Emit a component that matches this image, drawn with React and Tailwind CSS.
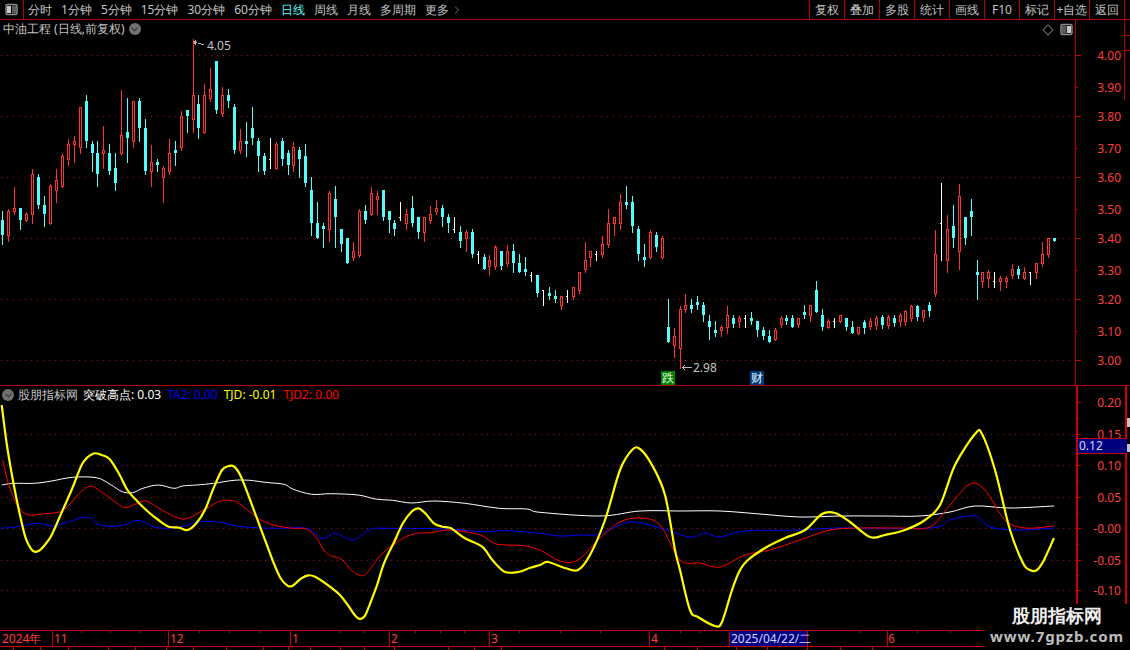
import React from "react";
import { ChevronDown, ChevronRight } from "lucide-react";

const G = [
  { ox: 0, oy: 40, d: `c 7 514 540 585 612|r 25 507 513 588 603|r 43 441 504 516 522|c 61 504 504 540 567|r 79 516 522 543 543|r 97 387 402 525 549|c 115 402 411 495 504|c 133 468 495 522 558|r 151 432 438 552 552|r 169 387 420 453 486|r 187 342 348 441 441|r 205 297 312 360 375|r 223 288 303 315 366|r 241 201 201 324 339|c 259 165 183 303 321|c 277 303 312 339 393|c 292 303 339 402 438|r 310 258 330 342 384|c 328 312 339 393 402|c 346 339 384 429 450|r 364 150 285 342 342|c 382 174 276 294 366|r 400 183 183 306 321|c 418 174 183 264 303|c 436 237 264 393 402|r 454 315 366 396 438|c 472 357 366 375 393|r 490 378 384 414 486|r 508 297 339 396 402|c 526 303 330 339 375|r 544 213 228 324 330|c 562 210 210 228 276|r 580 -3 165 240 276|c 595 165 192 264 294|r 613 132 165 279 279|r 631 84 147 177 183|c 649 63 63 210 219|r 667 141 165 222 228|c 685 147 165 183 201|c 703 192 201 330 339|r 721 267 303 333 339|c 739 246 303 312 348|c 757 201 264 294 312|c 775 294 303 348 393|c 793 339 348 393 402|w 811 294 357 357 384|r 829 306 312 387 387|c 847 294 303 357 375|c 865 330 339 375 402|r 881 306 321 378 393|c 898 321 330 357 411|c 916 312 348 429 438|c 934 411 450 549 585|c 952 486 549 594 594|c 970 549 558 567 621|r 988 453 459 570 603|c 1006 438 477 531 621|c 1024 567 567 612 633|c 1042 594 594 669 669|r 1060 606 633 654 660|r 1078 507 513 648 651` },
  { ox: 300, oy: 170, d: `c 196 105 123 150 159|r 214 51 69 135 135|r 232 63 78 90 132|c 250 60 60 141 150|c 268 123 123 150 186|c 283 150 159 177 195|w 301 96 141 141 150|r 319 117 132 162 177|c 337 78 114 159 168|c 355 141 141 186 204|r 373 141 141 189 213|r 391 108 132 153 159|r 409 90 114 126 132|c 427 105 114 141 168|c 445 132 141 159 186|w 463 141 177 177 186|c 481 168 186 213 231|r 499 180 186 207 243|c 517 177 186 252 261|w 535 243 252 252 279|c 553 252 261 297 297|r 568 255 270 291 315|r 586 225 231 291 297|c 604 243 243 288 297|r 622 225 243 282 288|c 640 222 243 279 306|c 658 252 279 306 306|c 676 261 297 306 315|w 694 306 315 315 333|c 712 315 315 369 378|w 730 360 360 360 405|c 748 351 369 378 387|c 766 360 378 387 396|r 784 378 378 408 417|w 802 360 378 378 396|r 820 351 351 381 387|r 838 306 306 363 369|r 856 216 270 300 306|r 871 243 243 264 288|w 889 243 252 252 270|r 907 198 222 255 261|r 925 117 159 225 231|r 943 141 141 162 195|r 961 72 96 162 177|c 979 48 96 105 114|c 997 78 96 168 186|c 1015 168 177 252 270|c 1033 222 261 270 288|r 1051 180 186 264 264|c 1069 186 195 231 243|r 1087 198 204 264 264|c 1105 387 471 516 516|r 1123 474 498 528 561` },
  { ox: 620, oy: 280, d: `r 181 78 87 207 265|r 197 42 75 90 96|c 214 57 75 87 96|c 232 48 66 75 87|c 250 66 75 105 123|c 268 105 123 141 177|c 286 123 150 159 168|r 304 135 141 153 168|r 322 78 105 144 159|c 340 105 114 132 141|r 358 108 114 126 141|w 376 105 114 114 141|c 394 96 114 123 132|c 412 123 123 150 168|c 430 141 150 168 177|c 448 150 168 186 186|r 466 144 150 180 180|r 484 108 114 135 141|c 499 105 114 123 132|c 517 105 114 141 141|r 535 114 114 135 141|c 553 75 96 105 114|r 571 75 75 108 123|c 589 3 30 96 96|c 607 87 105 141 150|r 625 117 123 144 144|w 643 114 123 123 141|r 661 105 105 126 126|c 679 114 114 141 150|c 697 123 141 159 159|r 715 141 141 162 162` },
  { ox: 0, oy: 0, d: `c 2592 960 966 984 999|r 2610 954 963 981 987|r 2628 948 954 978 987|c 2646 945 951 975 984|r 2664 945 951 978 984|c 2682 945 954 969 978|r 2700 939 945 966 978|r 2715 930 933 966 975|r 2733 915 918 957 963|c 2751 915 918 951 960|r 2769 930 930 954 963|c 2787 906 915 933 948` },
  { ox: 900, oy: 170, d: `r 107 180 252 372 378|w 124 39 160 160 270|r 142 135 177 273 306|c 160 105 168 204 231|r 178 42 78 246 297|c 196 141 141 204 222|c 214 87 123 141 195|c 232 270 306 315 387|r 247 306 306 336 351|r 265 300 306 327 351|w 283 306 333 333 351|r 301 318 324 336 360|r 319 318 324 336 351|r 337 282 297 318 324|c 355 288 297 315 324|r 373 291 306 327 327|w 391 306 306 306 342|r 409 279 279 309 324|r 427 216 252 282 288|r 445 204 204 255 261|c 463 204 204 213 213` },
];

const candles = G.flatMap((g) =>
  g.d.split("|").map((row) => {
    const [t, ...n] = row.trim().split(" ");
    const [x, h, a, b, l] = n.map(Number);
    return {
      t,
      x: g.ox + Math.floor(x / 3),
      h: g.oy + Math.floor(h / 3),
      a: g.oy + Math.floor(a / 3),
      b: g.oy + Math.floor(b / 3),
      l: g.oy + Math.floor(l / 3),
    };
  })
);

const CYAN = "#54fcfc";
const RED = "#ff3232";
const LINE = "#b40000";
const DOT = "#a01414";

function Candle({ c }) {
  const cx = c.x + 0.5;
  if (c.t === "w") {
    return (
      <g stroke="#ffffff">
        <line x1={cx} x2={cx} y1={c.h} y2={c.l + 1} />
        <line x1={c.x - 1} x2={c.x + 1} y1={c.a + 0.5} y2={c.a + 0.5} />
      </g>
    );
  }
  if (c.t === "c") {
    return (
      <g>
        <line x1={cx} x2={cx} y1={c.h} y2={c.l + 1} stroke={CYAN} />
        <rect x={c.x - 1} y={c.a} width={3} height={Math.max(c.b - c.a, 2)} fill={CYAN} />
      </g>
    );
  }
  return (
    <g stroke={RED}>
      <line x1={cx} x2={cx} y1={c.h} y2={c.a} />
      <line x1={cx} x2={cx} y1={c.b} y2={c.l + 1} />
      <rect x={c.x - 0.5} y={c.a + 0.5} width={2} height={Math.max(c.b - c.a - 1, 1)} fill="#000000" />
    </g>
  );
}

const fromZoom = (pts) => pts.map(([x, y]) => [x / 2.904, 395 + y / 3]);

const yellow = [
  ...fromZoom([[5,30],[20,150],[40,270],[60,370],[75,430],[95,467],[112,468],[130,450],[150,420],[180,350],[210,280],[240,205],[270,176],[295,180],[318,192],[345,235],[370,285],[400,320],[430,350],[460,375],[490,395],[520,398],[545,405],[570,385],[595,345],[620,280],[645,225],[665,213],[680,215],[700,245],[730,325],[755,395],[775,450],[795,505],[815,550],[835,572],[850,572],[875,550],[895,541],[915,545],[945,565],[985,598],[1010,630],[1030,660],[1045,672],[1060,662],[1075,625],[1095,570],[1115,505],[1145,440],[1170,385],[1195,350],[1215,340],[1235,355],[1260,385],[1285,395],[1310,400],[1350,430],[1400,455],[1430,495],[1465,530],[1505,531],[1540,518],[1568,510]]),
  [548,562],[565,568],[578,570],[590,555],[605,520],[620,470],[632,450],[640,449],[652,465],[665,495],[675,550],[680,570],[690,610],[698,617],[715,626],[722,622],[732,590],[740,570],[748,560],[765,548],[785,538],[805,530],[822,514],[835,513],[850,522],[870,537],[885,535],[905,530],[925,520],[940,505],[955,465],[975,434],[982,434],[995,470],[1010,530],[1023,563],[1030,570],[1037,570],[1044,560],[1054,538],
];
const white = [
  ...fromZoom([[5,270],[40,265],[100,265],[150,258],[210,247],[280,248],[320,268],[355,290],[385,293],[415,280],[460,270],[505,280],[530,273],[570,270],[620,265],[680,256],[725,256],[770,262],[825,268],[850,282],[905,298],[960,296],[1040,300],[1090,312],[1140,316],[1195,324],[1260,318],[1350,325],[1450,340],[1530,342],[1568,352]]),
  [600,516],[640,511],[680,511],[720,511],[760,514],[800,517],[840,516],[880,516],[920,516],[950,512],[975,506],[1010,508],[1054,506],
];
const red = [
  ...fromZoom([[8,195],[20,250],[40,310],[60,345],[85,360],[120,357],[175,350],[205,325],[235,290],[265,274],[300,295],[340,325],[365,338],[410,320],[430,320],[470,345],[515,368],[545,370],[600,340],[640,318],[675,317],[700,330],[750,370],[795,390],[850,400],[890,402],[920,430],[940,465],[960,482],[990,492],[1020,525],[1045,541],[1065,535],[1105,480],[1135,455],[1170,430],[1210,415],[1250,413],[1300,405],[1360,412],[1400,422],[1435,445],[1470,450],[1520,452],[1568,465]]),
  [560,561],[578,560],[600,538],[620,522],[640,518],[660,525],[680,560],[700,563],[720,567],[745,555],[770,550],[800,540],[830,530],[860,528],[900,528],[930,527],[950,505],[970,484],[985,490],[1005,520],[1025,528],[1054,526],
];
const blue = [
  ...fromZoom([[5,400],[50,395],[110,385],[150,393],[200,380],[240,367],[265,370],[285,388],[320,394],[360,390],[395,376],[420,382],[450,397],[490,400],[530,395],[575,381],[630,380],[700,395],[800,400],[890,400],[935,430],[975,415],[1025,435],[1075,403],[1120,400],[1300,402],[1400,410],[1470,407],[1568,415]]),
  [560,536],[580,535],[600,534],[630,522],[660,528],[690,537],[705,533],[720,537],[745,531],[800,530],[840,528],[930,528],[950,520],[975,516],[990,527],[1020,530],[1054,528],
];

function curve(p) {
  let d = `M${p[0][0].toFixed(1)} ${p[0][1].toFixed(1)}`;
  for (let i = 0; i < p.length - 1; i++) {
    const a = p[Math.max(i - 1, 0)], b = p[i], c = p[i + 1], e = p[Math.min(i + 2, p.length - 1)];
    const c1 = [b[0] + (c[0] - a[0]) / 6, b[1] + (c[1] - a[1]) / 6];
    const c2 = [c[0] - (e[0] - b[0]) / 6, c[1] - (e[1] - b[1]) / 6];
    d += `C${c1[0].toFixed(1)} ${c1[1].toFixed(1)} ${c2[0].toFixed(1)} ${c2[1].toFixed(1)} ${c[0].toFixed(1)} ${c[1].toFixed(1)}`;
  }
  return d;
}

const priceAxis = [
  ["4.00", 55], ["3.90", 87], ["3.80", 116], ["3.70", 148], ["3.60", 177], ["3.50", 209],
  ["3.40", 238], ["3.30", 270], ["3.20", 299], ["3.10", 331], ["3.00", 360],
];
const indAxis = [
  ["0.20", 402], ["0.15", 434], ["0.10", 465], ["0.05", 497], ["-0.00", 528], ["-0.05", 560], ["-0.10", 590],
];

const menu = ["分时", "1分钟", "5分钟", "15分钟", "30分钟", "60分钟", "日线", "周线", "月线", "多周期"];
const tools = ["复权", "叠加", "多股", "统计", "画线", "F10", "标记", "+自选", "返回"];

function PanelIcon() {
  return (
    <svg width="13" height="13" viewBox="0 0 13 13" fill="none">
      <rect x="1" y="1.5" width="11" height="10" rx="1.5" stroke="#8c8c8c" strokeWidth="1.5" />
      <rect x="2" y="2.5" width="4.5" height="8" fill="#5c5c5c" />
      <rect x="7" y="3" width="4" height="7" fill="#c8c8c8" />
    </svg>
  );
}

function Chevron() {
  return (
    <span className="flex h-[12px] w-[12px] items-center justify-center rounded-full bg-[#707070]">
      <ChevronDown size={11} strokeWidth={2} color="#111111" />
    </span>
  );
}

export default function App() {
  return (
    <div className="relative flex h-[650px] w-[1130px] flex-col overflow-hidden bg-black font-['Liberation_Sans','Noto_Sans_CJK_SC',sans-serif] text-[12px] leading-none text-[#c4c4c4]">
      {/* toolbar */}
      <div className="flex h-[20px] shrink-0 border-b border-[#b40000]">
        <div className="flex w-[24px] shrink-0 items-center justify-center border-r border-[#b40000]">
          <svg width="13" height="13" viewBox="0 0 13 13" fill="none">
            <rect x="1" y="1.5" width="11" height="10" rx="1.5" stroke="#8c8c8c" strokeWidth="1.5" />
            <rect x="2" y="3" width="4" height="7" fill="#c8c8c8" />
            <rect x="7" y="2.5" width="4" height="8" fill="#5c5c5c" />
          </svg>
        </div>
        <div className="flex items-center gap-[9px] pl-[4px]">
          {menu.map((m) => (
            <span key={m} className={m === "日线" ? "text-[#54fcfc]" : ""}>{m}</span>
          ))}
          <span className="flex items-center gap-[2px]">更多<ChevronRight size={12} strokeWidth={1.2} /></span>
        </div>
        <div className="ml-auto flex">
          {tools.map((t) => (
            <div key={t} className="flex w-[35px] items-center justify-center border-l border-[#b40000]">{t}</div>
          ))}
          <div className="w-[6px] border-l border-[#b40000]" />
        </div>
      </div>

      {/* price panel */}
      <div className="flex h-[365px] shrink-0">
        <div className="relative w-[1075px] shrink-0">
          <svg width="1075" height="365" viewBox="0 20 1075 365" className="block" shapeRendering="crispEdges">
            {priceAxis.filter((_, i) => i % 2 === 0).map(([l, y]) => (
              <line key={l} x1="1" x2="1075" y1={y + 0.5} y2={y + 0.5} stroke={DOT} strokeDasharray="1 5" />
            ))}
            {candles.map((c, i) => <Candle key={i} c={c} />)}
            <g stroke="#b8b8b8" fill="none">
              <path d="M194 42.5h3M194 42.5l2 -2M194 42.5l2 2M198 43.5h3M201 44.5h3" />
              <path d="M682 367.5h10M682 367.5l3 -2M682 367.5l3 2" />
            </g>
            <g fill="#c4c4c4" fontSize="12" shapeRendering="auto">
              <text x="207" y="50">4.05</text>
              <text x="693" y="372">2.98</text>
            </g>
          </svg>
          <div className="absolute left-[3px] top-[3px] flex items-center gap-[4px]">
            <span>中油工程 (日线,前复权)</span>
            <Chevron />
          </div>
          <div className="absolute right-[2px] top-[3px] flex items-center gap-[8px]">
            <span className="h-[8px] w-[8px] rotate-45 border border-[#6c6c6c]" />
            <PanelIcon />
          </div>
          <span className="absolute left-[661px] top-[351px] flex h-[14px] w-[14px] items-center justify-center bg-[#008000] text-[#e8ffe8]">跌</span>
          <span className="absolute left-[750px] top-[351px] flex h-[14px] w-[14px] items-center justify-center bg-[#003c78] text-[#e8f4ff]">财</span>
        </div>
        <div className="w-[55px] shrink-0 border-l border-[#b40000]">
          <svg width="54" height="365" viewBox="1076 20 54 365" className="block" shapeRendering="crispEdges">
            {priceAxis.map(([l, y], i) => (
              <g key={l}>
                <line x1="1076" x2={i % 2 === 0 ? 1081 : 1078} y1={y + 0.5} y2={y + 0.5} stroke="#c80000" />
                <text x="1121" y={y + 5} textAnchor="end" fontSize="12" fill="#ff3c3c" shapeRendering="auto">{l}</text>
              </g>
            ))}
            <line x1="1124.5" x2="1124.5" y1="20" y2="100" stroke="#b40000" />
            <line x1="1124" x2="1130" y1="35.5" y2="35.5" stroke="#b40000" />
            <line x1="1124" x2="1130" y1="50.5" y2="50.5" stroke="#b40000" />
          </svg>
        </div>
      </div>

      {/* indicator panel */}
      <div className="flex h-[245px] shrink-0 border-t border-[#b40000]">
        <div className="relative w-[1076px] shrink-0">
          <svg width="1076" height="244" viewBox="0 386 1076 244" className="block">
            {indAxis.slice(1).map(([l, y]) => (
              <line key={l} x1="1" x2="1076" y1={y + 0.5} y2={y + 0.5} stroke={DOT} strokeDasharray="1 5" shapeRendering="crispEdges" />
            ))}
            <path d={curve(white)} fill="none" stroke="#ffffff" strokeWidth="1" />
            <path d={curve(blue)} fill="none" stroke="#0000ff" strokeWidth="1" />
            <path d={curve(red)} fill="none" stroke="#ff0000" strokeWidth="1" />
            <path d={curve(yellow)} fill="none" stroke="#ffff00" strokeWidth="2.2" />
          </svg>
          <div className="absolute left-[2px] top-[3px] flex items-center gap-[4px]">
            <Chevron />
            <span className="mr-[1px]">股朋指标网</span>
            <span className="mr-[2px] text-white">突破高点: 0.03</span>
            <span className="mr-[2px] text-[#0000ff]">TA2: 0.00</span>
            <span className="mr-[3px] text-[#ffff00]">TJD: -0.01</span>
            <span className="text-[#ff0000]">TJD2: 0.00</span>
          </div>
        </div>
        <div className="relative w-[54px] shrink-0 border-l-2 border-[#c80000]">
          <svg width="52" height="244" viewBox="1078 386 52 244" className="block" shapeRendering="crispEdges">
            {[...indAxis, ["", 418], ["", 449], ["", 481], ["", 513], ["", 544], ["", 575]].map(([l, y]) => (
              <g key={y}>
                <line x1="1078" x2={l ? 1081 : 1079} y1={y + 0.5} y2={y + 0.5} stroke="#c80000" />
                {l && <text x="1121" y={y + 5} textAnchor="end" fontSize="12" fill="#ff3c3c" shapeRendering="auto">{l}</text>}
              </g>
            ))}
            <line x1="1126" x2="1126" y1="386" y2="630" stroke="#c80000" strokeWidth="2" />
            <rect x="1127" y="418" width="3" height="9" fill="#c4c4c4" />
            <rect x="1127" y="444" width="3" height="8" fill="#c4c4c4" />
          </svg>
          <div className="absolute left-0 top-[52px] flex h-[16px] w-[49px] items-center border-y border-[#c80000] bg-[#000080] pl-[1px] text-[#d4d4ff]">0.12</div>
        </div>
      </div>

      {/* date axis */}
      <svg width="1130" height="20" viewBox="0 630 1130 20" className="block shrink-0" shapeRendering="crispEdges">
        <line x1="0" x2="1130" y1="630.5" y2="630.5" stroke="#c80000" />
        <line x1="0" x2="1130" y1="646.5" y2="646.5" stroke="#c80000" />
        {[52, 168, 290, 389, 489, 649, 729, 807, 887].map((x) => (
          <line key={x} x1={x + 0.5} x2={x + 0.5} y1="631" y2="646" stroke="#c80000" />
        ))}
        {[81, 110, 139, 199, 229, 259, 340, 364, 415, 440, 464, 519, 560, 600, 680, 700, 860, 917, 950].map((x) => (
          <line key={x} x1={x + 0.5} x2={x + 0.5} y1="631" y2="633" stroke="#c80000" />
        ))}
        {[13, 40, 68, 108, 135, 166, 193, 226, 263, 288, 310, 340, 364, 394, 448, 474, 501, 664, 697, 736, 767, 807, 840, 872].map((x) => (
          <line key={x} x1={x + 0.5} x2={x + 0.5} y1="647" y2="650" stroke="#c80000" />
        ))}
        <g fontSize="12" fill="#ff3c3c" shapeRendering="auto">
          <text x="2" y="643">2024年</text>
          <text x="54" y="643">11</text>
          <text x="170" y="643">12</text>
          <text x="292" y="643">1</text>
          <text x="391" y="643">2</text>
          <text x="491" y="643">3</text>
          <text x="651" y="643">4</text>
          <text x="888" y="643">6</text>
        </g>
        <rect x="729" y="631" width="78" height="15" fill="#000080" />
        <line x1="729.5" x2="729.5" y1="631" y2="646" stroke="#c80000" />
        <line x1="807.5" x2="807.5" y1="631" y2="646" stroke="#c80000" />
        <text x="731" y="643" fontSize="12" fill="#d4d4ff" shapeRendering="auto">2025/04/22/二</text>
      </svg>

      {/* watermark */}
      <div className="absolute left-[984px] top-[604px] flex h-[46px] w-[146px] flex-col items-center bg-black pt-[1px]">
        <span className="text-[18px] font-bold leading-[21px] text-[#f0f0f0]">股朋指标网</span>
        <span className="mt-[1px] text-[15px] font-bold leading-[18px] tracking-[0.9px] text-[#bdbdbd]">www.7gpzb.com</span>
      </div>
    </div>
  );
}
